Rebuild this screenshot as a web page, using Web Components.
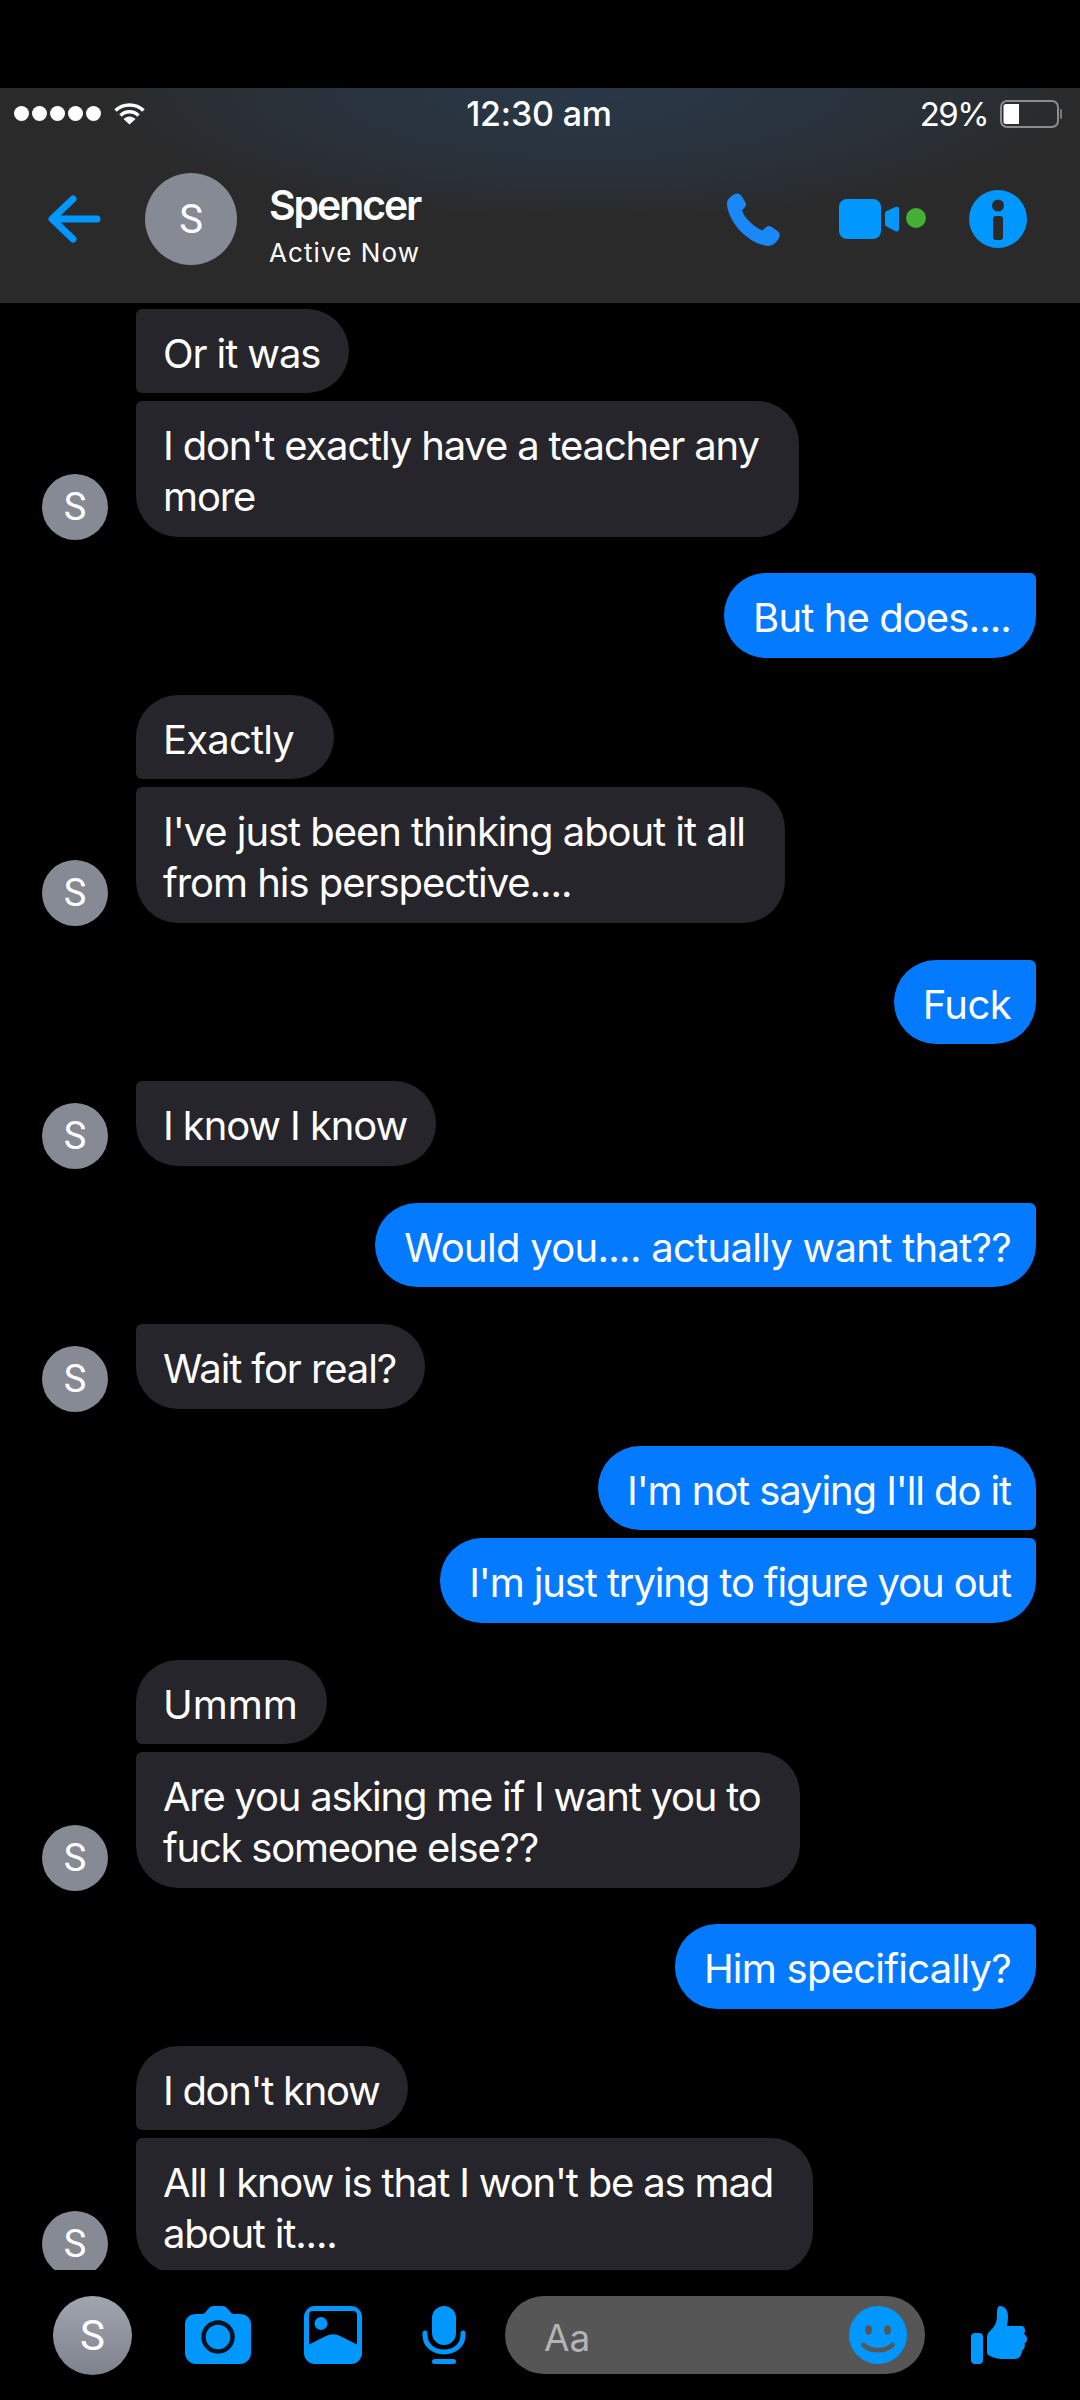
<!DOCTYPE html>
<html lang="en">
<head>
<meta charset="utf-8">
<title>Spencer</title>
<style>
  html, body { margin: 0; padding: 0; background: #000; }
  body { font-family: Inter, "Liberation Sans", sans-serif; color: #fff; }
</style>
</head>
<body>
<chat-app>
  <chat-header slot="header" name="Spencer" status="Active Now" time="12:30 am" battery="29%"></chat-header>
  <message-list slot="messages">
    <chat-group side="in">
      <chat-bubble pos="in-middle">Or it was</chat-bubble>
      <chat-bubble pos="in-last" wide track="-1.16px">I don't exactly have a teacher any<br>more</chat-bubble>
    </chat-group>
    <chat-group side="out"><chat-bubble track="-.9px">But he does....</chat-bubble></chat-group>
    <chat-group side="in">
      <chat-bubble pos="in-first" wide track="-.8px">Exactly</chat-bubble>
      <chat-bubble pos="in-last" wide track="-1.05px">I've just been thinking about it all<br>from his perspective....</chat-bubble>
    </chat-group>
    <chat-group side="out"><chat-bubble track="-.6px">Fuck</chat-bubble></chat-group>
    <chat-group side="in"><chat-bubble>I know I know</chat-bubble></chat-group>
    <chat-group side="out"><chat-bubble track="-.72px">Would you.... actually want that??</chat-bubble></chat-group>
    <chat-group side="in"><chat-bubble>Wait for real?</chat-bubble></chat-group>
    <chat-group side="out">
      <chat-bubble pos="out-first">I'm not saying I'll do it</chat-bubble>
      <chat-bubble pos="out-last" track="-1.13px">I'm just trying to figure you out</chat-bubble>
    </chat-group>
    <chat-group side="in">
      <chat-bubble pos="in-first" track="0">Ummm</chat-bubble>
      <chat-bubble pos="in-last" wide track="-1.24px">Are you asking me if I want you to<br>fuck someone else??</chat-bubble>
    </chat-group>
    <chat-group side="out"><chat-bubble track="-.75px">Him specifically?</chat-bubble></chat-group>
    <chat-group side="in">
      <chat-bubble pos="in-first" track="-1.3px">I don't know</chat-bubble>
      <chat-bubble pos="in-last" wide track="-1.18px">All I know is that I won't be as mad<br>about it....</chat-bubble>
    </chat-group>
  </message-list>
  <composer-bar slot="composer"></composer-bar>
</chat-app>

<script>
const BLUE = "#0098ff";

customElements.define("chat-app", class extends HTMLElement {
  constructor() {
    super();
    this.attachShadow({ mode: "open" }).innerHTML = `
      <style>
        :host {
          display: flex;
          flex-direction: column;
          width: 1080px;
          height: 2400px;
          padding-top: 88px;
          box-sizing: border-box;
          overflow: hidden;
          background: #000;
        }
        ::slotted(message-list) { flex: 1; min-height: 0; }
      </style>
      <slot name="header"></slot>
      <slot name="messages"></slot>
      <slot name="composer"></slot>
    `;
  }
});

customElements.define("letter-avatar", class extends HTMLElement {
  constructor() {
    super();
    this.attachShadow({ mode: "open" }).innerHTML = `
      <style>
        :host {
          display: flex;
          flex: none;
          align-items: center;
          justify-content: center;
          width: var(--size, 66px);
          height: var(--size, 66px);
          border-radius: 50%;
          background: var(--fill, #868a94);
          color: #fff;
          font: 400 var(--letter, 38px) Roboto, Inter, sans-serif;
        }
      </style>
      <slot>S</slot>
    `;
  }
});

customElements.define("chat-header", class extends HTMLElement {
  constructor() {
    super();
    const name = this.getAttribute("name"), status = this.getAttribute("status");
    const time = this.getAttribute("time"), battery = this.getAttribute("battery");
    this.attachShadow({ mode: "open" }).innerHTML = `
      <style>
        :host {
          display: block;
          height: 215px;
          flex: none;
          box-sizing: border-box;
          background:
            radial-gradient(ellipse 500px 135px at 590px 0, rgba(41, 56, 72, 1), rgba(41, 56, 72, .6) 55%, rgba(42, 42, 42, 0) 100%),
            #2a2a2a;
        }
        .status {
          display: grid;
          grid-template-columns: 1fr auto 1fr;
          align-items: center;
          height: 85px;
          padding: 0 18px 34px 14px;
          box-sizing: border-box;
          font-size: 34px;
        }
        .left, .right { display: flex; align-items: center; }
        .right { justify-content: flex-end; }
        .dots { display: flex; gap: 3px; margin-right: 13px; }
        .dots i { width: 15px; height: 15px; border-radius: 50%; background: #fff; }
        .time { font-weight: 500; letter-spacing: -.2px; margin-left: 2px; }
        .pct { margin-right: 12px; font-size: 33px; letter-spacing: -1.6px; }
        .nav { display: flex; align-items: center; height: 92px; padding: 0 53px 0 48px; }
        .who { display: flex; flex-direction: column; margin-left: 32px; flex: 1; padding-top: 13px; }
        .name { font-size: 41px; font-weight: 600; line-height: 46px; letter-spacing: -2.1px; }
        .sub { font-size: 26px; line-height: 32px; letter-spacing: 1.1px; margin-top: 9px; }
        letter-avatar { --size: 92px; --letter: 40px; margin-left: 44px; }
        svg { display: block; flex: none; }
        .phone { margin-right: 59px; }
        .video { margin-right: 43px; }
      </style>
      <div class="status">
        <div class="left">
          <div class="dots"><i></i><i></i><i></i><i></i><i></i></div>
          <svg width="31" height="23" viewBox="0 0 31 23" fill="none" stroke="#fff" stroke-width="3.500">
            <path d="M1.500 8.500C9 1 22 1 29.500 8.500"/>
            <path d="M6.500 13.500C11.500 8.500 19.500 8.500 24.500 13.500"/>
            <path d="M15.500 22.500L9.500 17C13 13.500 18 13.500 21.500 17Z" fill="#fff" stroke="none"/>
          </svg>
        </div>
        <div class="time">${time}</div>
        <div class="right">
          <span class="pct">${battery}</span>
          <svg width="62" height="28" viewBox="0 0 62 28" fill="none">
            <rect x="1" y="1" width="57" height="26" rx="6" stroke="#8b8d8f" stroke-width="2"/>
            <path d="M6 4H19V24H6A2.500 2.500 0 0 1 3.500 21.500V6.500A2.500 2.500 0 0 1 6 4Z" fill="#fff"/>
            <rect x="60" y="9" width="2" height="10" rx="1" fill="#77797b"/>
          </svg>
        </div>
      </div>
      <div class="nav">
        <svg width="53" height="48" viewBox="0 0 53 48" fill="none" stroke="${BLUE}" stroke-width="7" stroke-linecap="round" stroke-linejoin="round">
          <path d="M49 24H6M25 4L4 24L25 44"/>
        </svg>
        <letter-avatar>S</letter-avatar>
        <div class="who">
          <div class="name">${name}</div>
          <div class="sub">${status}</div>
        </div>
        <svg class="phone" width="53" height="53" viewBox="0 0 53 53" fill="#1a88f7">
          <path d="M7 1.500C10 -.5 13 .5 14.500 3L18.500 9.500C19.500 11.500 19 13 17.500 14.500L15 17.500C17 24 27 34.500 35.500 37.500L38.500 34.500C40 33 42 32.500 44 33.500L50.500 38C53 40 53.500 43 51.500 46C48.500 50.500 45 53 41 53C31 52 19 45 11 35.500C3.500 26 -.5 16 0 9.500C.5 6 3.500 3.500 7 1.500Z"/>
        </svg>
        <svg class="video" width="87" height="40" viewBox="0 0 87 40">
          <rect x="0" y="0" width="42" height="40" rx="8" fill="${BLUE}"/>
          <path d="M46 14.500C46 13.500 46.500 12.800 47.200 12.200L56.500 8C58.500 7.300 60 8 60 10V30C60 32 58.500 33 56.500 32.200L47.500 27.500C46.500 27 46 26 46 25Z" fill="${BLUE}"/>
          <circle cx="77" cy="19" r="10" fill="#45b035"/>
        </svg>
        <svg width="58" height="58" viewBox="0 0 58 58">
          <circle cx="29" cy="29" r="29" fill="${BLUE}"/>
          <circle cx="29" cy="15.500" r="6" fill="#2a2a2a"/>
          <rect x="24" y="26" width="10" height="24" rx="3" fill="#2a2a2a"/>
        </svg>
      </div>
    `;
  }
});

customElements.define("message-list", class extends HTMLElement {
  constructor() {
    super();
    this.attachShadow({ mode: "open" }).innerHTML = `
      <style>
        :host {
          display: flex;
          flex-direction: column;
          gap: 36.95px;
          padding-top: 5.500px;
          box-sizing: border-box;
          overflow: hidden;
        }
      </style>
      <slot></slot>
    `;
  }
});

customElements.define("chat-group", class extends HTMLElement {
  constructor() {
    super();
    const incoming = this.getAttribute("side") === "in";
    this.attachShadow({ mode: "open" }).innerHTML = `
      <style>
        :host {
          display: flex;
          flex: none;
          align-items: flex-end;
          gap: 28px;
          padding: ${incoming ? "0 0 0 42px" : "0 44px 0 0"};
          justify-content: ${incoming ? "flex-start" : "flex-end"};
          --bubble: ${incoming ? "#26252b" : "#047bff"};
          --pad-left: ${incoming ? "27px" : "29px"};
          --pad-right: ${incoming ? "29px" : "25px"};
          --single-corners: ${incoming ? "6px 42px 42px 42px" : "42px 6px 42px 42px"};
        }
        .stack {
          display: flex;
          flex-direction: column;
          align-items: ${incoming ? "flex-start" : "flex-end"};
          gap: 8px;
        }
        letter-avatar { margin-bottom: -3px; }
      </style>
      ${incoming ? "<letter-avatar>S</letter-avatar>" : ""}
      <div class="stack"><slot></slot></div>
    `;
  }
});

// corner sets: top-left, top-right, bottom-right, bottom-left
const CORNERS = {
  "in-middle": "6px 42px 42px 6px",
  "in-first": "42px 42px 42px 6px",
  "in-last": "6px 42px 42px 42px",
  "out-first": "42px 42px 6px 42px",
  "out-last": "42px 6px 42px 42px",
};

customElements.define("chat-bubble", class extends HTMLElement {
  constructor() {
    super();
    const radius = CORNERS[this.getAttribute("pos")] || "var(--single-corners)";
    const track = this.getAttribute("track") || "-1.1px";
    const right = this.hasAttribute("wide") ? "40px" : "var(--pad-right)";
    this.attachShadow({ mode: "open" }).innerHTML = `
      <style>
        :host {
          display: block;
          padding: 19px ${right} 14.500px var(--pad-left);
          background: var(--bubble);
          border-radius: ${radius};
          color: #fff;
          font-size: 40px;
          line-height: 51px;
          letter-spacing: ${track};
          white-space: nowrap;
        }
      </style>
      <slot></slot>
    `;
  }
});

customElements.define("composer-bar", class extends HTMLElement {
  constructor() {
    super();
    this.attachShadow({ mode: "open" }).innerHTML = `
      <style>
        :host {
          display: flex;
          flex: none;
          align-items: center;
          height: 130px;
          padding-left: 53px;
          box-sizing: border-box;
          background: #000;
        }
        letter-avatar {
          --size: 79px;
          --letter: 42px;
          --fill: linear-gradient(#a1a5af, #7e828c);
        }
        svg { display: block; flex: none; }
        .camera { margin-left: 53px; }
        .gallery { margin-left: 53px; }
        .mic { margin-left: 60px; }
        .input {
          display: flex;
          align-items: center;
          justify-content: space-between;
          width: 420px;
          height: 78px;
          margin-left: 39px;
          padding: 0 18px 0 39px;
          box-sizing: border-box;
          border-radius: 39px;
          background: #565656;
          color: #b4b4b4;
          font-size: 37px;
        }
        .input span { padding-top: 5px; }
        .like { margin-left: 46px; }
      </style>
      <letter-avatar>S</letter-avatar>
      <svg class="camera" width="66" height="58" viewBox="0 0 66 58">
        <path d="M11 8H17C19 8 20 7 21 5.500C23.500 2 25.500 0 29 0H37C40.500 0 42.500 2 45 5.500C46 7 47 8 49 8H55C61 8 66 12 66 18V47C66 53 61 58 55 58H11C5 58 0 53 0 47V18C0 12 5 8 11 8Z" fill="${BLUE}"/>
        <circle cx="33" cy="31" r="14.500" fill="${BLUE}" stroke="#04121f" stroke-width="4.500"/>
      </svg>
      <svg class="gallery" width="58" height="58" viewBox="0 0 58 58">
        <rect width="58" height="58" rx="11" fill="${BLUE}"/>
        <path d="M9 5H49C51.500 5 53 6.500 53 9V38.500L37 30.500C31 27.500 27 27.500 21 30.500L5 38.500V9C5 6.500 6.500 5 9 5Z" fill="#000"/>
        <circle cx="17" cy="17.500" r="6.500" fill="${BLUE}"/>
      </svg>
      <svg class="mic" width="44" height="58" viewBox="0 0 44 58" fill="none">
        <rect x="10" y="0" width="24" height="39" rx="12" fill="${BLUE}"/>
        <path d="M3 27V29C3 39 11 46 22 46C33 46 41 39 41 29V27" stroke="${BLUE}" stroke-width="5" stroke-linecap="round"/>
        <rect x="10" y="53" width="24" height="5" rx="2.500" fill="${BLUE}"/>
      </svg>
      <div class="input">
        <span>Aa</span>
        <svg width="58" height="58" viewBox="0 0 58 58">
          <circle cx="29" cy="29" r="29" fill="${BLUE}"/>
          <ellipse cx="19.500" cy="24" rx="3.500" ry="4.800" fill="#565656"/>
          <ellipse cx="38.500" cy="24" rx="3.500" ry="4.800" fill="#565656"/>
          <path d="M14.500 39C22 46 36 46 43.500 39" fill="none" stroke="#565656" stroke-width="4.500" stroke-linecap="round"/>
        </svg>
      </div>
      <svg class="like" width="56" height="58" viewBox="0 0 56 58" fill="${BLUE}">
        <rect x="0" y="27" width="12" height="31" rx="4"/>
        <path d="M16 31C16 27.500 18 26 20 24C24 20 26 16 26 9C26 3 26.500 0 29 0C34 0 37 4 37 11C37 14 36.500 17 36 20H50C53 20 54 22 54 24.500C54 26 53.500 27 53 28C55 29 56 31 56 33C56 35 55 36.500 53.500 37.500C54 39 54 41 53 42.500C52.500 43.500 52 44 51 44.500C51 47 50 49 49 50.500C48 52 46 53 43 53H32C27 53 23 52 19 50C17 49 16 48 16 46Z"/>
      </svg>
    `;
  }
});
</script>
</body>
</html>
